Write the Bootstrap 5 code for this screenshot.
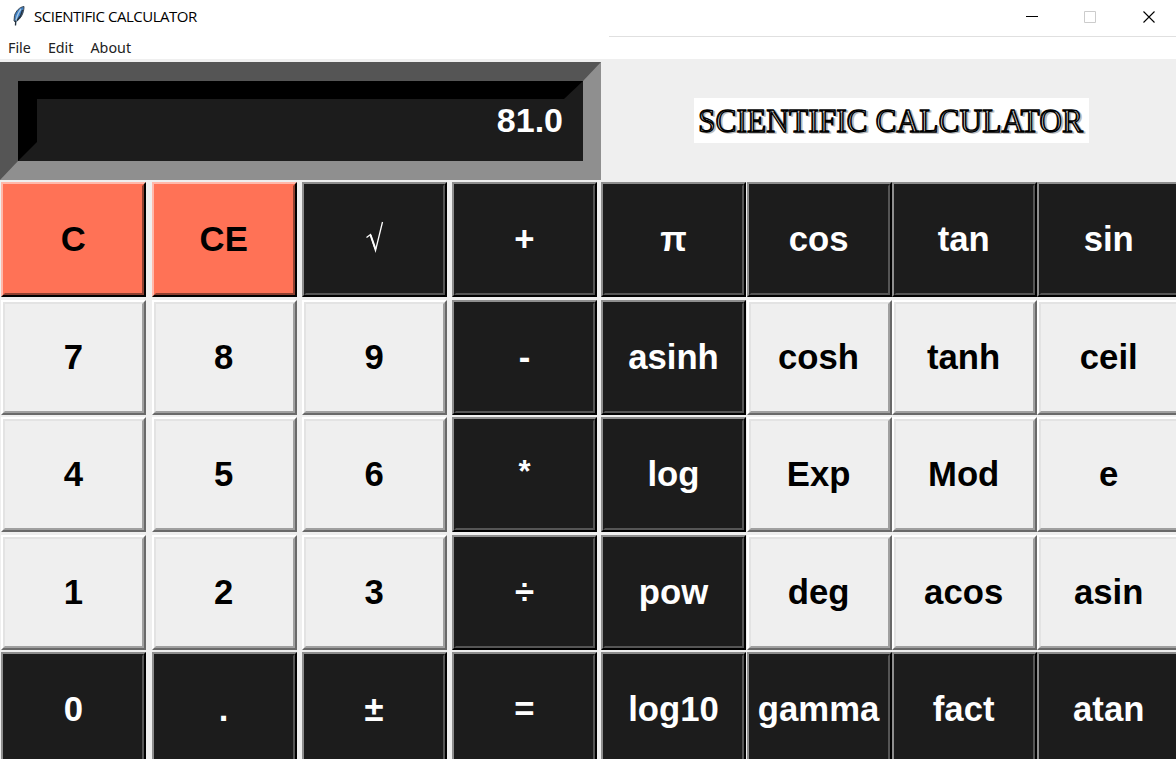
<!DOCTYPE html>
<html lang="en">
<head>
<meta charset="utf-8">
<title>Scientific Calculator</title>
<link href="https://cdn.jsdelivr.net/npm/bootstrap@5.3.0/dist/css/bootstrap.min.css" rel="stylesheet">
<style>
body{width:1176px;height:759px;background:#efefef;color:#000;font-family:"Liberation Sans",Arial,sans-serif}
.titlebar{height:36px;padding-left:10px}
.caption-text{font:15px/33px "Open Sans",sans-serif;letter-spacing:-.48px;margin-left:7px}
.feather{margin-top:5px}
.winctl{gap:40px;margin-right:20px;padding-top:7px}
.rule{height:1px;margin-left:609px;background:#e0e0e0}
.menus{height:22px;padding-left:8px;gap:17px;font:14.3px/22px "Noto Sans",sans-serif;color:#222}
.upper{height:123px;padding-top:3px}
.display-outer{width:601px;height:118px;border:solid;border-width:19px 18px 19px 18px;border-color:#555 #8f8f8f #8f8f8f #555}
.display-inner{height:80px;border:solid;border-width:18px 19px 19px 19px;border-color:#000 #1c1c1c #1c1c1c #000;background:#1c1c1c;color:#fff;font-size:34px;font-weight:700;line-height:42px;padding-right:1px}
.brand{width:395px;height:45px;margin:36px 0 0 93px;background:#fff;overflow:visible}
.brand text{font:400 34px "Liberation Serif",serif;stroke:#000;stroke-width:1.3px;text-shadow:2px 1px 0 #bbb}
.keys{display:grid;grid-template-columns:repeat(4,145px);grid-auto-rows:115px;row-gap:2.5px}
.left-keys{column-gap:5.4px;margin-left:1.3px}
.right-keys{column-gap:.1px;margin-left:4px}
.key{border:2px solid;border-radius:0;padding:0;font-size:34.7px;font-weight:700;line-height:1;background:#efefef;border-color:#fff #696969 #696969 #fff;color:#000;display:flex}
.key>span{flex:1;border:2px solid;border-color:#e3e3e3 #a0a0a0 #a0a0a0 #e3e3e3;display:flex;align-items:center;justify-content:center;padding:0 1px 0 0}
.dark{background:#1c1c1c;color:#fff;border-color:#8e8e8e #000 #000 #8e8e8e}
.dark>span{border-color:#1c1c1c #555 #555 #1c1c1c}
.coral{background:#ff7256;border-color:#ffb8aa #000 #000 #ffb8aa}
.coral>span{border-color:#ff7256 #8e4030 #8e4030 #ff7256}
.times{font-size:31px}
.times>span{padding-bottom:6px}
</style>
</head>
<body class="overflow-hidden">
<div class="bg-white">
<header class="titlebar d-flex">
<svg class="feather" width="17" height="22" viewBox="0 0 17 22"><path d="M14 1.500C9.500 2 6 6 4.500 10.500L4 16l1.500 1C10 14.500 14 9 14 1.500Z" fill="#3f7fc4" stroke="#3c464f" stroke-width="1"/><path d="M11 4C8 8 6 13 5.500 20" fill="none" stroke="#a9c9e2" stroke-width="1.300"/><path d="M5.700 15.500L5.500 20.500M12.500 5L10.500 11 7 15.500" fill="none" stroke="#24303b" stroke-width="1.300"/></svg>
<span class="caption-text">SCIENTIFIC CALCULATOR</span>
<div class="winctl d-flex ms-auto">
<svg width="18" height="20"><path d="M0 9.500H12" stroke="#000"/></svg>
<svg width="18" height="20"><path d="M.500 4.500h11v11H.500Z" fill="none" stroke="#ccc"/></svg>
<svg width="14" height="20"><path d="M1.500 4.500l11 11M12.500 4.500l-11 11" stroke="#000" stroke-width="1.100"/></svg>
</div>
</header>
<div class="rule"></div>
<nav class="menus d-flex"><span>File</span><span>Edit</span><span>About</span></nav>
</div>
<section class="upper d-flex">
<div class="display-outer"><div class="display-inner text-end">81.0</div></div>
<svg class="brand" width="395" height="45" role="img"><text x="4" y="34" textLength="385" lengthAdjust="spacingAndGlyphs">SCIENTIFIC CALCULATOR</text></svg>
</section>
<main class="d-flex">
<div class="keys left-keys">
<button class="key coral"><span>C</span></button><button class="key coral"><span>CE</span></button><button class="key dark"><span><svg width="22" height="38" viewBox="0 0 22 38" role="img" aria-label="square root"><path d="M3.500 16.500l4-3 5 16L19.500 1" fill="none" stroke="#fff" stroke-width="1.300"/><path d="M7.500 14l5 14" stroke="#fff" stroke-width="2"/></svg></span></button><button class="key dark"><span>+</span></button>
<button class="key"><span>7</span></button><button class="key"><span>8</span></button><button class="key"><span>9</span></button><button class="key dark"><span>-</span></button>
<button class="key"><span>4</span></button><button class="key"><span>5</span></button><button class="key"><span>6</span></button><button class="key dark times"><span>*</span></button>
<button class="key"><span>1</span></button><button class="key"><span>2</span></button><button class="key"><span>3</span></button><button class="key dark"><span>÷</span></button>
<button class="key dark"><span>0</span></button><button class="key dark"><span>.</span></button><button class="key dark"><span>±</span></button><button class="key dark"><span>=</span></button>
</div>
<div class="keys right-keys">
<button class="key dark"><span>π</span></button><button class="key dark"><span>cos</span></button><button class="key dark"><span>tan</span></button><button class="key dark"><span>sin</span></button>
<button class="key dark"><span>asinh</span></button><button class="key"><span>cosh</span></button><button class="key"><span>tanh</span></button><button class="key"><span>ceil</span></button>
<button class="key dark"><span>log</span></button><button class="key"><span>Exp</span></button><button class="key"><span>Mod</span></button><button class="key"><span>e</span></button>
<button class="key dark"><span>pow</span></button><button class="key"><span>deg</span></button><button class="key"><span>acos</span></button><button class="key"><span>asin</span></button>
<button class="key dark"><span>log10</span></button><button class="key dark"><span>gamma</span></button><button class="key dark"><span>fact</span></button><button class="key dark"><span>atan</span></button>
</div>
</main>
<script src="https://cdn.jsdelivr.net/npm/bootstrap@5.3.0/dist/js/bootstrap.bundle.min.js"></script>
</body></html>
